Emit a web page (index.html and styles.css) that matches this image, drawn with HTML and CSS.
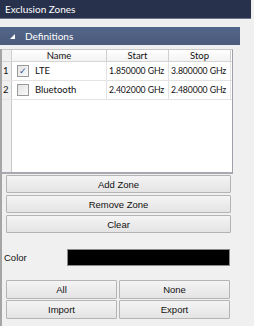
FILE: index.html
```html
<!DOCTYPE html>
<html lang="en">

<head>
    <meta charset="UTF-8">
    <title>Exclusion Zones</title>
    <link rel="stylesheet" href="styles.css">
</head>

<body>
    <div class="title-bar">Exclusion Zones</div>

    <div class="section-header">
        <span class="arrow"></span>
        <span>Definitions</span>
    </div>

    <div class="panel">
        <div class="zone-table">
            <div class="row head">
                <div class="cell num"></div>
                <div class="cell">Name</div>
                <div class="cell">Start</div>
                <div class="cell">Stop</div>
            </div>
            <div class="row">
                <div class="cell num">1</div>
                <div class="cell name"><span class="check on">&#10003;</span>LTE</div>
                <div class="cell freq">1.850000 GHz</div>
                <div class="cell freq">3.800000 GHz</div>
            </div>
            <div class="row">
                <div class="cell num">2</div>
                <div class="cell name"><span class="check"></span>Bluetooth</div>
                <div class="cell freq">2.402000 GHz</div>
                <div class="cell freq">2.480000 GHz</div>
            </div>
            <div class="row filler">
                <div class="cell num"></div>
                <div class="cell blank"></div>
            </div>
        </div>

        <div class="zone-buttons">
            <button class="btn">Add Zone</button>
            <button class="btn">Remove Zone</button>
            <button class="btn">Clear</button>
        </div>

        <div class="color-row">
            <span class="color-label">Color</span>
            <div class="swatch"></div>
        </div>

        <div class="grid-buttons">
            <button class="btn">All</button>
            <button class="btn">None</button>
            <button class="btn">Import</button>
            <button class="btn">Export</button>
        </div>
    </div>
</body>

</html>
```

FILE: styles.css
```css
body {
    margin: 0;
    width: 254px;
    height: 326px;
    background-color: #f0f0f0;
    font-family: Lato, "Liberation Sans", sans-serif;
    font-size: 9.5px;
    color: #111;
    overflow: hidden;
}

.title-bar {
    height: 19px;
    width: 251px;
    background-color: #28314c;
    color: white;
    font-size: 10px;
    line-height: 19px;
    padding-left: 5px;
    box-sizing: border-box;
    border-bottom: 1px solid #6b7590;
}

.section-header {
    margin-top: 8px;
    width: 240px;
    height: 18px;
    background: linear-gradient(180deg, #53668a, #4a5b7c);
    color: white;
    font-size: 10px;
    display: flex;
    align-items: center;
    gap: 10px;
    padding-left: 10px;
    box-sizing: border-box;
}

.arrow {
    width: 0;
    height: 0;
    border-left: 5px solid transparent;
    border-bottom: 5px solid white;
    margin-top: 1px;
}

.panel {
    margin-top: 4px;
    border-left: 2px solid #a5a5a5;
    height: 277px;
    box-sizing: border-box;
}

.zone-table {
    width: 231px;
    height: 125px;
    box-sizing: border-box;
    background-color: white;
    border-right: 1px solid #a0a0a8;
    border-top: 1px solid #c8c8c8;
    border-bottom: 2px solid #a8a8b0;
    display: flex;
    flex-direction: column;
}

.row {
    display: grid;
    grid-template-columns: 10px 95px 62px 62px;
    height: 19px;
    box-sizing: border-box;
    border-bottom: 1px solid #e3e3e3;
}

.row.head {
    height: 12px;
    border-bottom: 1px solid #d5d5d5;
    text-align: center;
}

.row.head .cell {
    background: linear-gradient(180deg, #ffffff, #f3f3f3);
    border-right: 1px solid #cfcfcf;
    line-height: 11px;
}

.row.head .cell.num {
    background: #f0f0f0;
}

.row.filler {
    flex: 1;
    border-bottom: none;
}

.cell {
    border-right: 1px solid #e3e3e3;
    line-height: 18px;
    white-space: nowrap;
    overflow: hidden;
}

.cell.num {
    background-color: #f0f0f0;
    border-right: 1px solid #c8c8c8;
    padding-left: 1px;
}

.cell.blank {
    border-right: none;
}

.cell.name {
    display: flex;
    align-items: center;
    padding-left: 5px;
}

.cell.freq {
    padding-left: 2px;
    font-size: 8.7px;
    letter-spacing: -0.1px;
}

.check {
    width: 10px;
    height: 10px;
    border: 1px solid #9a9a9a;
    background: linear-gradient(135deg, #e4e4e4, #fafafa);
    margin-right: 6px;
    font-size: 9px;
    line-height: 10px;
    text-align: center;
    color: #2f4f9a;
}

.zone-buttons {
    display: flex;
    flex-direction: column;
    gap: 2px;
    margin: 1px 0 0 4px;
    width: 225px;
}

.btn {
    height: 18px;
    border: 1px solid #b4b4b4;
    border-radius: 1px;
    background: linear-gradient(180deg, #f4f4f4, #e4e4e4);
    font-family: "Liberation Sans", Arial, sans-serif;
    font-size: 9.5px;
    color: #111;
    padding: 0;
}

.color-row {
    display: flex;
    align-items: center;
    margin-top: 16px;
    height: 17px;
    padding-left: 2px;
}

.color-label {
    width: 63px;
    font-family: "Liberation Sans", Arial, sans-serif;
    font-size: 9.5px;
}

.swatch {
    width: 163px;
    height: 17px;
    background-color: black;
    border: 1px solid #8a8a8a;
    box-sizing: border-box;
}

.grid-buttons {
    display: grid;
    grid-template-columns: 111px 111px;
    column-gap: 2px;
    row-gap: 1px;
    margin: 14px 0 0 4px;
}

.grid-buttons .btn {
    height: 19px;
}
```
